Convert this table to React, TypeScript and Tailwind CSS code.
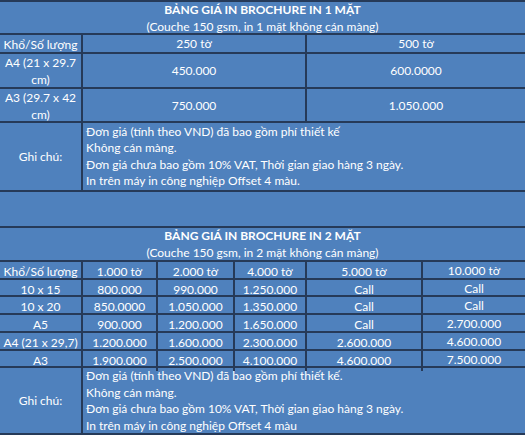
const line = "border-[#263a58]";

type Row = { label: string; cells: string[]; h: string };

const table1: Row[] = [
  { label: "Khổ/Số lượng", cells: ["250 tờ", "500 tờ"], h: "h-[19px]" },
  { label: "A4 (21 x 29.7 cm)", cells: ["450.000", "600.0000"], h: "h-[35px]" },
  { label: "A3 (29.7 x 42 cm)", cells: ["750.000", "1.050.000"], h: "h-[34px]" },
];

const table2: Row[] = [
  { label: "Khổ/Số lượng", cells: ["1.000 tờ", "2.000 tờ", "4.000 tờ", "5.000 tờ", "10.000 tờ"], h: "h-[18px]" },
  { label: "10 x 15", cells: ["800.000", "990.000", "1.250.000", "Call", "Call"], h: "h-[17px]" },
  { label: "10 x 20", cells: ["850.0000", "1.050.000", "1.350.000", "Call", "Call"], h: "h-[18px]" },
  { label: "A5", cells: ["900.000", "1.200.000", "1.650.000", "Call", "2.700.000"], h: "h-[18px]" },
  { label: "A4 (21 x 29,7)", cells: ["1.200.000", "1.600.000", "2.300.000", "2.600.000", "4.600.000"], h: "h-[18px]" },
  { label: "A3", cells: ["1.900.000", "2.500.000", "4.100.000", "4.600.000", "7.500.000"], h: "h-[17px]" },
];

function Title({ title, sub, h }: { title: string; sub: string; h: string }) {
  return (
    <div className={`${h} flex flex-col items-center justify-center border-b-2 ${line} leading-[17px]`}>
      <div className="font-bold">{title}</div>
      <div>{sub}</div>
    </div>
  );
}

function Notes({ h, cols, notes }: { h: string; cols: string; notes: string[] }) {
  return (
    <div className={`grid ${cols} ${h} border-b-2 ${line}`}>
      <div className={`flex items-center justify-center border-r-2 ${line}`}>Ghi chú:</div>
      <div className="flex flex-col justify-center pl-[3px] leading-[16.5px]">
        {notes.map((n) => (
          <div key={n}>{n}</div>
        ))}
      </div>
    </div>
  );
}

export default function App() {
  return (
    <div className="w-[525px] bg-white text-[12px] text-white" style={{ fontFamily: "Lato, 'Noto Sans', sans-serif" }}>
      <div className={`bg-[#4f81bd] border-t-2 ${line}`}>
        <Title h="h-[33px]" title="BẢNG GIÁ IN BROCHURE IN 1 MẶT" sub="(Couche 150 gsm, in 1 mặt không cán màng)" />
        {table1.map((r) => (
          <div key={r.label} className={`grid grid-cols-[83px_224px_1fr] ${r.h} border-b-2 ${line}`}>
            <div className={`flex items-center justify-center text-center leading-[17px] border-r-2 ${line}`}>{r.label}</div>
            <div className={`flex items-center justify-center border-r-2 ${line}`}>{r.cells[0]}</div>
            <div className="flex items-center justify-center">{r.cells[1]}</div>
          </div>
        ))}
        <Notes
          h="h-[69px]"
          cols="grid-cols-[83px_1fr]"
          notes={[
            "Đơn giá (tính theo VND) đã bao gồm phí thiết kế",
            "Không cán màng.",
            "Đơn giá chưa bao gồm 10% VAT, Thời gian giao hàng 3 ngày.",
            "In trên máy in công nghiệp Offset 4 màu.",
          ]}
        />

        <div className="h-[34px]" />

        <div className={`border-t-2 ${line}`}>
          <Title h="h-[34px]" title="BẢNG GIÁ IN BROCHURE IN 2 MẶT" sub="(Couche 150 gsm, in 2 mặt không cán màng)" />
          {table2.map((r) => (
            <div key={r.label} className={`grid grid-cols-[83px_75px_77px_72px_116px_1fr] ${r.h} border-b-2 ${line}`}>
              <div className={`flex items-center justify-center whitespace-nowrap border-r-2 ${line}`}>{r.label}</div>
              {r.cells.map((c, i) => (
                <div
                  key={i}
                  className={`flex items-center justify-center whitespace-nowrap ${i < 4 ? `border-r-2 ${line}` : "pb-[2px]"}`}
                >
                  {c}
                </div>
              ))}
            </div>
          ))}
          <Notes
            h="h-[67px]"
            cols="grid-cols-[83px_1fr]"
            notes={[
              "Đơn giá (tính theo VND) đã bao gồm phí thiết kế.",
              "Không cán màng.",
              "Đơn giá chưa bao gồm 10% VAT, Thời gian giao hàng 3 ngày.",
              "In trên máy in công nghiệp Offset 4 màu",
            ]}
          />
        </div>
      </div>
    </div>
  );
}
